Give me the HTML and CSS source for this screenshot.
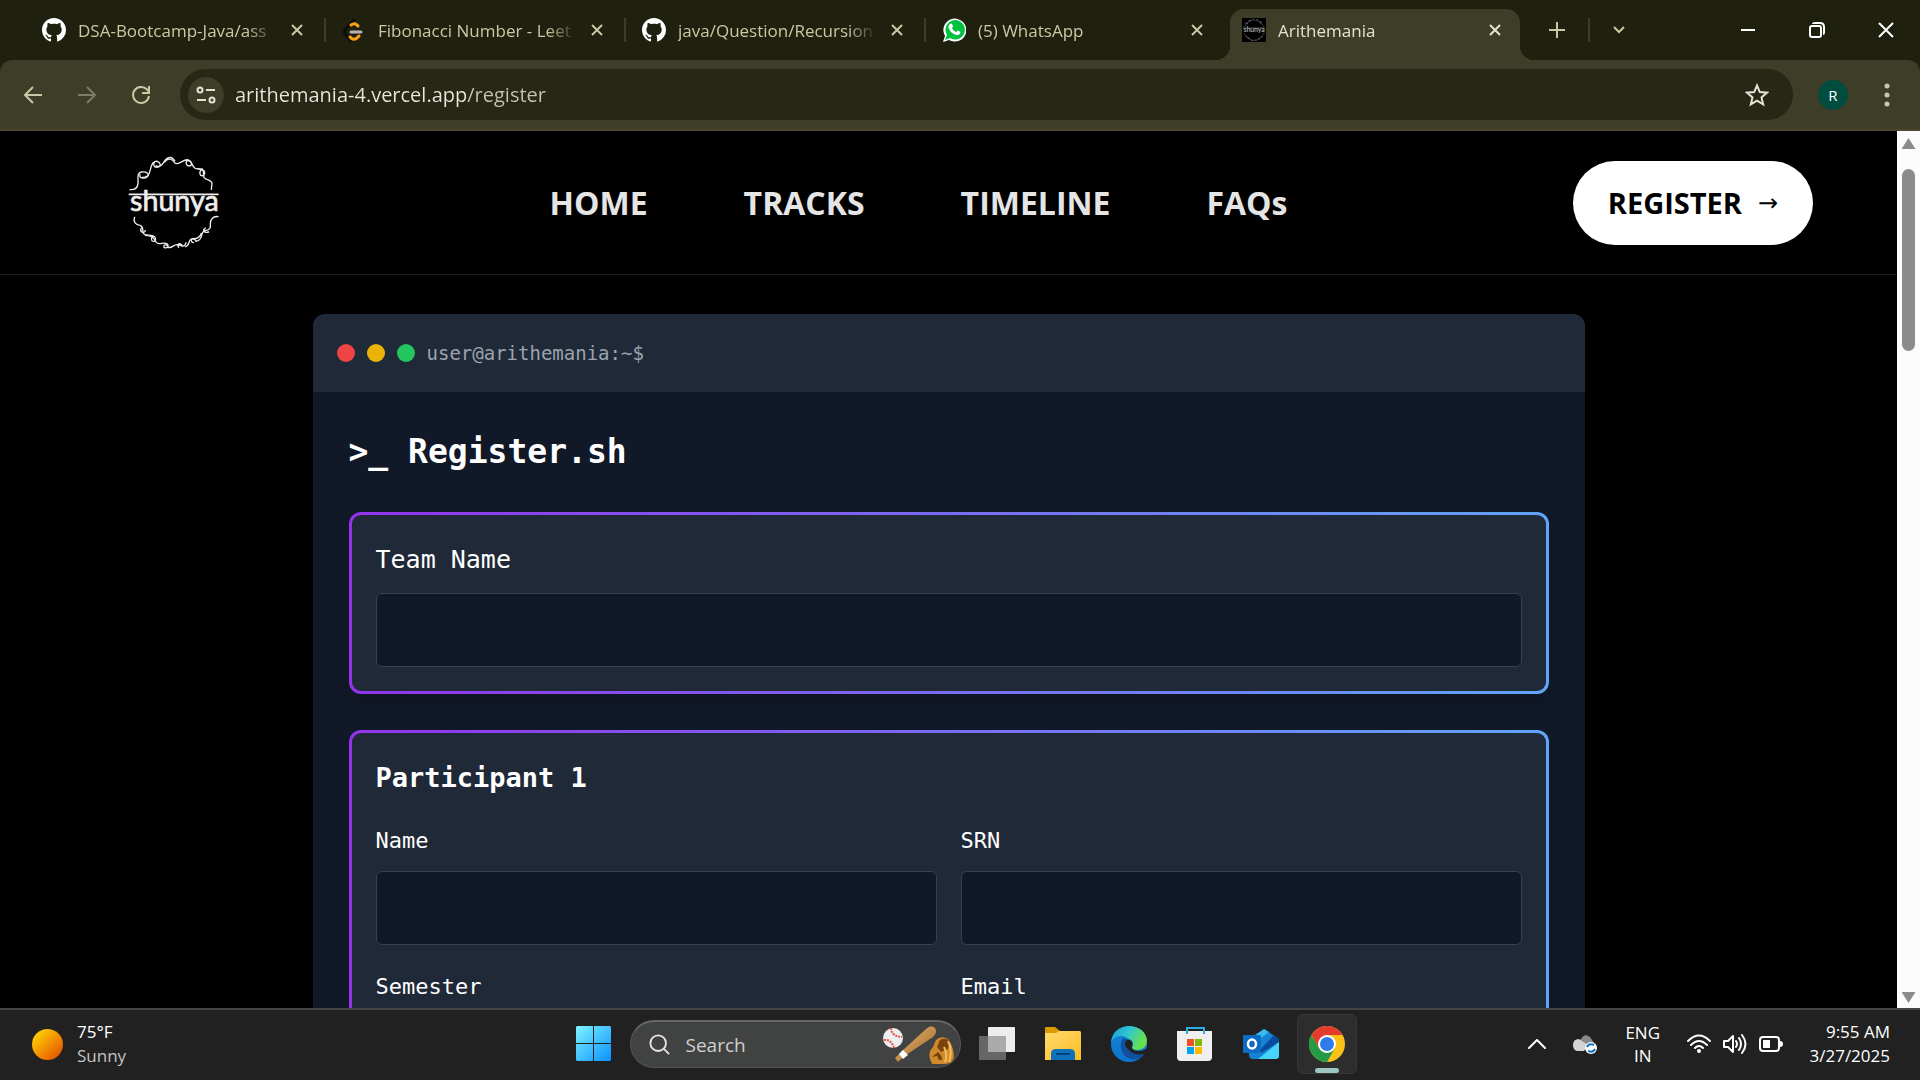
FILE: index.html
```html
<!DOCTYPE html>
<html lang="en">
<head>
<meta charset="utf-8">
<meta name="viewport" content="width=device-width, initial-scale=1">
<title>Arithemania</title>
<link rel="stylesheet" href="styles.css">
</head>
<body>
<svg class="defs" width="0" height="0" aria-hidden="true">
  <symbol id="github" viewBox="0 0 16 16"><path fill="#fff" d="M8 0C3.58 0 0 3.58 0 8c0 3.54 2.29 6.53 5.47 7.59.4.07.55-.17.55-.38 0-.19-.01-.82-.01-1.49-2.01.37-2.53-.49-2.69-.94-.09-.23-.48-.94-.82-1.13-.28-.15-.68-.52-.01-.53.63-.01 1.08.58 1.23.82.72 1.21 1.87.87 2.33.66.07-.52.28-.87.51-1.07-1.78-.2-3.64-.89-3.64-3.95 0-.87.31-1.59.82-2.15-.08-.2-.36-1.02.08-2.12 0 0 .67-.21 2.2.82.64-.18 1.32-.27 2-.27s1.36.09 2 .27c1.53-1.04 2.2-.82 2.2-.82.44 1.1.16 1.92.08 2.12.51.56.82 1.27.82 2.15 0 3.07-1.87 3.75-3.65 3.95.29.25.54.73.54 1.48 0 1.07-.01 1.93-.01 2.2 0 .21.15.46.55.38A8.01 8.01 0 0 0 16 8c0-4.42-3.58-8-8-8z"/></symbol>
  <symbol id="cross" viewBox="0 0 12 12"><path fill="none" stroke="currentColor" stroke-width="2" d="M1 1l10 10M11 1L1 11"/></symbol>
  <symbol id="emblem" viewBox="-6 15 300 300">
    <g fill="none" stroke="currentColor" stroke-width="4" stroke-linecap="round">
      <path d="M12 125C28 126 35 118 36 106C37 90 32 74 46 72C62 70 72 78 64 86C54 94 38 90 42 80"/>
      <path d="M48 88C72 90 70 72 76 54C80 40 92 36 100 44C106 50 102 58 92 58C84 58 80 48 86 42"/>
      <path d="M90 54C108 60 112 42 120 34C130 24 140 28 146 38"/>
      <path d="M116 42C126 26 140 34 146 44C158 56 172 30 188 36C198 42 200 52 190 54C182 54 178 46 182 40"/>
      <path d="M180 38C198 34 196 52 206 60C214 66 226 60 234 68C240 78 232 86 224 82C220 76 222 68 228 62"/>
      <path d="M214 62C240 62 230 78 234 88C240 98 256 94 258 106L256 124"/>
      <path d="M26 208C20 222 30 230 42 232C56 236 46 250 54 258C64 264 76 258 86 266C92 276 86 284 78 278C74 272 78 264 84 266"/>
      <path d="M46 240C40 250 52 260 58 248M58 262C84 264 84 272 90 282C98 294 112 280 124 288C130 296 122 302 114 298C112 290 118 288 126 294"/>
      <path d="M124 298C142 302 140 288 156 290C172 298 178 294 180 284M158 298C150 288 162 282 170 294"/>
      <path d="M178 296C194 292 184 276 198 272C214 274 222 268 226 256M202 284C188 278 200 266 210 278"/>
      <path d="M210 280C232 276 222 258 234 248C248 244 246 250 252 240C256 230 248 222 258 212C264 206 268 204 276 206M248 252C234 256 228 246 238 240"/>
      <path stroke-width="5" d="M10 139H276"/>
    </g>
    <text x="12" y="188" font-family="Lato, sans-serif" font-size="86" fill="currentColor" stroke="currentColor" stroke-width="2">shunya</text>
  </symbol>
</svg>

<div class="browser">
  <div class="tabstrip">
    <div class="tab"><svg class="fav"><use href="#github"/></svg><span class="title">DSA-Bootcamp-Java/ass</span><button class="close" aria-label="Close tab"><svg><use href="#cross"/></svg></button></div>
    <div class="tab"><svg class="fav" viewBox="0 0 24 24" fill="none" stroke-width="3" stroke-linecap="round"><path stroke="#0c0c08" d="M12 2L4 11q-3 3 0 6l4 5"/><path stroke="#ffa116" d="M9 7q4-3 7 1M8 19q4 5 9-1"/><path stroke="#b3b3b3" d="M9 14h10"/></svg><span class="title">Fibonacci Number - Leet</span><button class="close" aria-label="Close tab"><svg><use href="#cross"/></svg></button></div>
    <div class="tab"><svg class="fav"><use href="#github"/></svg><span class="title">java/Question/Recursion</span><button class="close" aria-label="Close tab"><svg><use href="#cross"/></svg></button></div>
    <div class="tab no-line"><svg class="fav" viewBox="0 0 24 24"><path fill="#fff" d="M1 24l2-6A11.500 11.500 0 1 1 7 22z"/><path fill="#00c13f" d="M3 22l2-5A9.700 9.700 0 1 1 8 20z"/><path fill="#fff" d="M8 6c1-1 2-.5 2.300.5l.7 1.800c.2.800-1 1.300-1 2 1 2 2.500 3 4 3.700.8 0 1.200-1.500 2-1.400l2.200 1.100c.8.700-.5 3.300-2.700 3.300C11 17 6.500 12 6.500 9 6.500 7.500 7.200 6.500 8 6z"/></svg><span class="title">(5) WhatsApp</span><button class="close" aria-label="Close tab"><svg><use href="#cross"/></svg></button></div>
    <div class="tab active"><svg class="fav mini"><use href="#emblem"/></svg><span class="title">Arithemania</span><button class="close" aria-label="Close tab"><svg><use href="#cross"/></svg></button></div>
    <button class="strip-btn" aria-label="New tab"><svg viewBox="0 0 16 16" width="16" height="16"><path d="M8 0v16M0 8h16"/></svg></button>
    <button class="strip-btn lined" aria-label="Search tabs"><svg viewBox="0 0 14 14" width="14" height="14"><path d="M2 4l5 5 5-5"/></svg></button>
    <div class="window-btns">
      <button aria-label="Minimize"><svg viewBox="0 0 16 16"><path d="M1 8h14"/></svg></button>
      <button aria-label="Restore"><svg viewBox="0 0 16 16"><rect x="1" y="4" width="11" height="11" rx="2"/><path d="M4 2q0-1 2-1h5q4 0 4 4v5q0 2-1 2"/></svg></button>
      <button aria-label="Close window"><svg viewBox="0 0 16 16"><path d="M1 1l14 14M15 1L1 15"/></svg></button>
    </div>
  </div>

  <div class="toolbar">
    <button class="tool" aria-label="Back"><svg viewBox="0 0 20 20"><path d="M19 10H2M10 2l-8 8 8 8"/></svg></button>
    <button class="tool dim" aria-label="Forward"><svg viewBox="0 0 20 20"><path d="M1 10h17M10 2l8 8-8 8"/></svg></button>
    <button class="tool" aria-label="Reload"><svg viewBox="0 0 20 20"><path d="M18 11a8 8 0 1 1-2-6.500L18 7M18 1v7h-7"/></svg></button>
    <div class="omnibox">
      <button class="site" aria-label="Site information"><svg viewBox="0 0 20 20"><circle cx="4" cy="5" r="2.500"/><path d="M10 5h9M1 15h9"/><circle cx="16" cy="15" r="2.500"/></svg></button>
      <input class="url" type="text" aria-label="Address" value="arithemania-4.vercel.app/register">
      <button class="star" aria-label="Bookmark"><svg viewBox="0 0 24 24"><path d="M12 2.500l2.800 6.600 7.200.6-5.500 4.700 1.700 7L12 17.700l-6.200 3.700 1.700-7L2 9.700l7.200-.6z"/></svg></button>
    </div>
    <button class="avatar">R</button>
    <button class="more" aria-label="Menu"><svg viewBox="0 0 6 24" width="6" height="24"><circle cx="3" cy="3" r="2.500"/><circle cx="3" cy="12" r="2.500"/><circle cx="3" cy="21" r="2.500"/></svg></button>
  </div>
</div>

<div class="viewport">
  <div class="page">
    <header class="site-header">
      <a class="logo" href="#" aria-label="Home"><svg><use href="#emblem"/></svg></a>
      <nav class="links">
        <a href="#home">HOME</a><a href="#tracks">TRACKS</a><a href="#timeline">TIMELINE</a><a href="#faqs">FAQs</a>
      </nav>
      <button class="register">REGISTER <span class="arrow">→</span></button>
    </header>
    <main class="terminal">
      <div class="terminal-bar">
        <span class="dot red"></span><span class="dot yellow"></span><span class="dot green"></span>
        <span class="prompt">user@arithemania:~$</span>
      </div>
      <form class="terminal-body">
        <h1>&gt;_ Register.sh</h1>
        <section class="card">
          <label class="team" for="team">Team Name</label>
          <input id="team" type="text">
        </section>
        <section class="card">
          <h2>Participant 1</h2>
          <div class="fields">
            <div><label for="name">Name</label><input id="name" type="text"></div>
            <div><label for="srn">SRN</label><input id="srn" type="text"></div>
            <div><label for="semester">Semester</label><input id="semester" type="text"></div>
            <div><label for="email">Email</label><input id="email" type="email"></div>
          </div>
        </section>
      </form>
    </main>
  </div>
  <div class="scrollbar"><span class="up"></span><span class="thumb"></span><span class="down"></span></div>
</div>

<footer class="taskbar">
  <div class="weather"><span class="sun"></span><p>75°F<br><span class="muted">Sunny</span></p></div>
  <div class="apps">
    <button class="app" aria-label="Start"><svg viewBox="0 0 36 36"><defs><linearGradient id="win" x1="0" y1="0" x2="1" y2="1"><stop offset="0" stop-color="#7df4ff"/><stop offset="1" stop-color="#0a90ff"/></linearGradient></defs><path fill="url(#win)" d="M1 0h16v17H0V1zM18 0h16l1 1v16H18zM0 18h17v17H1l-1-1zM18 18h17v16l-1 1H18z"/></svg></button>
    <div class="search">
      <svg class="glass" viewBox="0 0 24 24"><circle cx="10" cy="10" r="8.500"/><path d="M16 16l6 6"/></svg>
      <input type="text" aria-label="Search" placeholder="Search">
      <svg class="baseball" viewBox="0 0 72 40">
        <defs><linearGradient id="bat" x1="0" y1="0" x2="1" y2="1"><stop offset="0" stop-color="#e2b777"/><stop offset="1" stop-color="#a46620"/></linearGradient></defs>
        <circle cx="10" cy="13" r="10" fill="#eeedf2"/><path d="M8 3q0 8 11 9M1 15q7-1 10 8" fill="none" stroke="#e8543a" stroke-width="2" stroke-dasharray="2 1"/>
        <path fill="url(#bat)" d="M12 33l7-7L43 4q5-5 9-1 3 5-2 9L20 32l-5 5z"/><path fill="#fff" d="M16 29l4-4 5 5-5 4z"/>
        <path fill="#d08a2c" d="M47 34q-2-7 3-12l3-7q5-5 12-1 5 6 6 17 0 7-9 8H49z"/><path fill="#79420f" d="M54 22l3-7q5-3 10 1l-2 8-7 3zM50 31l5-4q4 3 4 8h-3l-2-4-5 1z"/><path d="M65 16q5 10 1 21M61 22q4 8 1 15" fill="none" stroke="#f3bd5c" stroke-width="2"/>
      </svg>
    </div>
    <button class="app" aria-label="Task view"><svg viewBox="0 0 36 36"><rect x="9" y="1" width="27" height="25" rx="1" fill="#eee"/><rect y="10" width="27" height="24" rx="1" fill="#666"/><path fill="#aaa" d="M9 10h18v16H9z"/></svg></button>
    <button class="app" aria-label="File Explorer"><svg viewBox="0 0 36 36"><defs><linearGradient id="fold" x1="0" y1="0" x2="1" y2="1"><stop offset="0" stop-color="#ffdb70"/><stop offset="1" stop-color="#fbbc20"/></linearGradient></defs><path fill="#dd9a00" d="M0 2q0-1 1-1h9l5 4v4H0z"/><path fill="url(#fold)" d="M0 7h11l3-2h21l1 1v28H0z"/><path fill="#0c72bd" d="M6 34v-6q0-5 5-5h14q5 0 5 5v6z"/><path stroke="#053f78" stroke-width="2" d="M11 28h14"/></svg></button>
    <button class="app" aria-label="Edge"><svg viewBox="0 0 36 36"><defs><linearGradient id="edge1" x1="0" y1="0" x2="1" y2=".4"><stop offset="0" stop-color="#1698dd"/><stop offset=".5" stop-color="#30c6d0"/><stop offset="1" stop-color="#67e24d"/></linearGradient><linearGradient id="edge2" x1="0" y1="0" x2="0" y2="1"><stop offset="0" stop-color="#1685cf"/><stop offset="1" stop-color="#0a74d2"/></linearGradient></defs><circle cx="18" cy="18" r="18" fill="url(#edge2)"/><path fill="#11509c" d="M12 12q-5 9 1 17 8 8 18 2l2-4q-9 3-13-3-5-5-2-10z"/><path fill="url(#edge1)" d="M0 16Q2 1 18 0q16 1 18 14 0 9-9 10-7 0-6-3 3-6-3-8Q8 5 0 16z"/><path fill="#202120" d="M14 18q1-5 5-4 4 3 2 7 0 4 7 4 5 0 8-3v4l-3 2q-9 2-14-3-5-4-5-7z"/></svg></button>
    <button class="app" aria-label="Microsoft Store"><svg viewBox="0 0 36 36"><path fill="none" stroke="#29aee8" stroke-width="2" d="M10 8V2h17v6"/><path fill="#efefef" d="M0 5h35v26q0 4-4 4H4q-4 0-4-4z"/><path fill="none" stroke="#29aee8" stroke-width="2" d="M10 8V5M27 8V5"/><path fill="#f25022" d="M10 13h7v7h-7z"/><path fill="#7fba00" d="M18 13h7v7h-7z"/><path fill="#00a4ef" d="M10 21h7v7h-7z"/><path fill="#ffb900" d="M18 21h7v7h-7z"/></svg></button>
    <button class="app" aria-label="Outlook"><svg viewBox="0 0 36 36"><path fill="#1583d2" d="M6 13L21 3l15 10v16q0 4-4 4H10q-4 0-4-4z"/><path fill="#39b9f0" d="M8 12L21 3l5 3L10 18z"/><path fill="#084a9e" d="M18 23L31 9l5 4v3L18 27z"/><path fill="#45d5fa" d="M15 33l21-17v14q0 3-4 3z"/><rect y="9" width="18" height="18" rx="1" fill="#0c6cc4"/><ellipse cx="9" cy="18" rx="4" ry="4.500" fill="none" stroke="#fff" stroke-width="2.500"/></svg></button>
    <button class="app current" aria-label="Chrome"><svg viewBox="0 0 36 36"><circle cx="18" cy="18" r="18" fill="#fbc116"/><path fill="#e33b2e" d="M2.400 9A18 18 0 0 1 33.600 9H18L10.200 22.500z"/><path fill="#279a47" d="M2.400 9A18 18 0 0 0 18 36l7.800-13.500H10.200z"/><circle cx="18" cy="18" r="9" fill="#fff"/><circle cx="18" cy="18" r="7" fill="#2f7bea"/></svg><span class="indicator"></span></button>
  </div>
  <div class="tray">
    <svg width="18" height="10" viewBox="0 0 18 10"><path class="line" d="M1 9l8-8 8 8"/></svg>
    <svg class="cloud" width="24" height="20" viewBox="0 0 24 20"><path fill="#888" d="M7 7Q11-2 17 3l4 6-8 6z"/><path fill="#d4d4d4" d="M0 11q0-6 6-6l9 6-4 6H4q-4-1-4-6z"/><circle cx="18" cy="14" r="6" fill="#fff"/><path fill="none" stroke="#1771c4" stroke-width="2" d="M14 13q2-4 7-2M22 15q-2 4-7 2"/></svg>
    <p class="lang">ENG<br>IN</p>
    <div class="status">
      <svg width="24" height="20" viewBox="0 0 24 20"><path class="line" d="M1 7q11-11 22 0M4 11q8-8 16 0M8 14q4-4 8 0"/><circle cx="12" cy="17" r="2" fill="#fff"/></svg>
      <svg width="24" height="20" viewBox="0 0 24 20"><path class="line" d="M1 7h4l5-5v16l-5-5H1zM13 7q2 3 0 6M16 4q4 6 0 12M19 1q7 9 0 18"/></svg>
      <svg width="24" height="20" viewBox="0 0 24 20"><rect class="line" x="1" y="3" width="19" height="14" rx="3"/><path fill="#fff" d="M4 6h7v8H4zM21 7q3 0 3 3t-3 3z"/></svg>
    </div>
    <p class="clock">9:55 AM<br>3/27/2025</p>
  </div>
</footer>
</body>
</html>
```
FILE: styles.css
```css
* { box-sizing: border-box; }
body {
  margin: 0;
  height: 100vh;
  display: flex;
  flex-direction: column;
  overflow: hidden;
  background: #000;
  color: #fff;
  font-family: "Open Sans", "Noto Sans", sans-serif;
}
button, input { font: inherit; color: inherit; border: 0; background: none; padding: 0; }
p, h1, h2 { margin: 0; }
svg { display: block; }
.defs { position: absolute; }

/* Browser window */
.browser { background: #1f200e; }
.tabstrip { display: flex; height: 60px; padding-left: 25px; color: #c8c9a5; }
.tab {
  position: relative;
  flex: 0 0 300px;
  min-width: 0;
  display: flex;
  align-items: center;
  gap: 12px;
  padding: 0 20px 0 17px;
}
.tab::after { content: ""; width: 2px; height: 24px; background: #3d3d28; position: absolute; right: -1px; top: 18px; }
.tab.no-line::after { display: none; }
.fav { flex: none; width: 24px; height: 24px; }
.mini { background: #000; color: #aaa; }
.title {
  flex: 1;
  min-width: 0;
  overflow: hidden;
  white-space: nowrap;
  padding-top: 2px;
  font-size: 17px;
  line-height: 24px;
  mask-image: linear-gradient(to right, #000 85%, transparent);
}
.close { flex: none; width: 16px; height: 16px; display: grid; place-items: center; }
.close svg { width: 12px; height: 12px; }
.tab.active {
  flex-basis: 290px;
  height: 51px;
  align-self: flex-end;
  margin: 0 6px 0 5px;
  padding: 0 17px 9px 12px;
  background: #3d3d28;
  border-radius: 14px 14px 0 0;
  color: #e3e4c9;
}
.tab.active::before, .tab.active::after {
  content: "";
  position: absolute;
  top: auto;
  bottom: 0;
  width: 14px;
  height: 14px;
}
.tab.active::before { left: -14px; background: radial-gradient(circle at 0 0, transparent 14px, #3d3d28 14px); }
.tab.active::after { right: -14px; background: radial-gradient(circle at 100% 0, transparent 14px, #3d3d28 14px); }
.strip-btn { flex: none; width: 62px; display: grid; place-items: center; }
.strip-btn svg { fill: none; stroke: currentColor; stroke-width: 2; }
.strip-btn.lined { background: linear-gradient(#3d3d28, #3d3d28) 0 18px / 2px 24px no-repeat; }
.window-btns { margin-left: auto; display: flex; }
.window-btns button { width: 69px; display: grid; place-items: center; }
.window-btns svg { width: 16px; height: 16px; fill: none; stroke: #fff; stroke-width: 2; }
.toolbar {
  display: flex;
  align-items: center;
  height: 71px;
  padding: 0 18px 0 6px;
  background: #3d3d28;
  border-bottom: 2px solid #49482f;
  border-radius: 12px 12px 0 0;
  color: #c8c9a5;
}
.tool { width: 54px; height: 54px; display: grid; place-items: center; }
.tool svg { width: 20px; height: 20px; fill: none; stroke: currentColor; stroke-width: 2; }
.dim { color: #7e7d63; }
.omnibox {
  flex: 1;
  display: flex;
  align-items: center;
  height: 51px;
  margin-left: 12px;
  padding: 0 24px 0 8px;
  border-radius: 26px;
  background: #262714;
  color: #e3e3d5;
}
.site { width: 36px; height: 36px; border-radius: 50%; background: #3d3d28; display: grid; place-items: center; }
.site svg { width: 20px; height: 20px; fill: none; stroke: currentColor; stroke-width: 2; }
.url {
  flex: 1;
  margin-left: 11px;
  font-size: 20px;
  outline: 0;
  color: transparent;
  background: linear-gradient(to right, #e9e9dc 232px, #c4c4b4 232px);
  background-clip: text;
}
.star svg { width: 24px; height: 24px; fill: none; stroke: currentColor; stroke-width: 2; }
.avatar { width: 30px; height: 30px; margin-left: 25px; border-radius: 50%; background: #004d40; color: #fff; font-size: 15px; }
.more { width: 30px; margin-left: 24px; display: grid; place-items: center; }
.more svg { fill: currentColor; }

/* Web page */
.viewport { flex: 1; min-height: 0; display: flex; overflow: hidden; }
.page { flex: 1; overflow: hidden; }
.site-header {
  display: flex;
  align-items: center;
  justify-content: space-between;
  height: 144px;
  padding: 0 84px;
  border-bottom: 1px solid #1c1c1c;
}
.logo { width: 180px; display: grid; place-items: center; color: #eee; }
.logo svg { width: 100px; height: 100px; }
.links { display: flex; gap: 96px; }
.links a { color: #e5e5e5; text-decoration: none; font-size: 32px; line-height: 44px; font-weight: 700; }
.register {
  display: flex;
  align-items: center;
  justify-content: center;
  gap: 16px;
  width: 240px;
  height: 84px;
  border-radius: 42px;
  background: #fff;
  color: #000;
  font-size: 29px;
  font-weight: 700;
}
.arrow { font-family: "DejaVu Sans", sans-serif; font-size: 24px; font-weight: 400; }
.terminal {
  max-width: 1272px;
  margin: 39px auto 0;
  border-radius: 12px;
  overflow: hidden;
  background: #111827;
  font-family: "DejaVu Sans Mono", "Liberation Mono", monospace;
}
.terminal-bar { display: flex; align-items: center; gap: 12px; height: 78px; padding: 0 24px; background: #1f2937; }
.dot { width: 18px; height: 18px; border-radius: 50%; }
.red { background: #ef4444; }
.yellow { background: #eab308; }
.green { background: #22c55e; }
.prompt { color: #9ca3af; font-size: 19px; }
.terminal-body { display: flex; flex-direction: column; gap: 36px; padding: 36px; }
h1 { font-size: 33px; line-height: 48px; }
h2 { font-size: 27px; line-height: 42px; margin-bottom: 24px; }
.card {
  padding: 24px;
  border: 3px solid transparent;
  border-radius: 12px;
  background: linear-gradient(#1f2937, #1f2937) padding-box, linear-gradient(to right, #9333ea, #60a5fa) border-box;
  box-shadow: 0 12px 18px -4px #0002;
}
.card label { display: block; margin-bottom: 12px; font-size: 22px; line-height: 36px; }
.card label.team { font-size: 25px; line-height: 42px; }
.card input { display: block; width: 100%; height: 74px; padding: 0 18px; border: 1px solid #374151; border-radius: 6px; background: #111827; }
.fields { display: grid; grid-template-columns: 1fr 1fr; gap: 24px; }
.scrollbar { flex: none; width: 23px; display: flex; flex-direction: column; align-items: center; padding: 7px 0 5px; background: #fcfcfc; }
.up, .down { width: 14px; height: 11px; background: #8b8b8b; clip-path: polygon(50% 0, 100% 100%, 0 100%); }
.down { margin-top: auto; clip-path: polygon(0 0, 100% 0, 50% 100%); }
.thumb { width: 13px; height: 182px; margin-top: 20px; border-radius: 7px; background: #8b8b8b; }

/* Taskbar */
.taskbar {
  flex: none;
  display: grid;
  grid-template-columns: 1fr auto 1fr;
  align-items: center;
  height: 72px;
  padding: 0 30px 2px;
  border-top: 2px solid #444543;
  background: #202120;
  font-size: 17px;
  line-height: 24px;
}
.weather { display: flex; align-items: center; gap: 14px; padding-left: 2px; }
.sun { width: 31px; height: 31px; border-radius: 50%; background: linear-gradient(135deg, #ffd400 10%, #e65300 90%); }
.muted { color: #c4c4c4; }
.apps { display: flex; align-items: center; gap: 6px; }
.app { position: relative; width: 60px; height: 60px; display: grid; place-items: center; border-radius: 6px; }
.app svg { width: 36px; height: 36px; }
.current { background: #2d2d2d; border: 1px solid #383838; }
.indicator { position: absolute; left: 17px; bottom: 0; width: 24px; height: 5px; border-radius: 3px; background: #9cc5c4; }
.search {
  display: flex;
  align-items: center;
  width: 331px;
  height: 48px;
  padding: 0 5px 0 18px;
  border: 1px solid #555;
  border-top: 2px solid #666;
  border-radius: 24px;
  background: #414242;
}
.glass { width: 22px; height: 22px; fill: none; stroke: #e4e4e4; stroke-width: 2; }
.search input { flex: 1; min-width: 0; margin-left: 15px; font-size: 19px; }
.search input::placeholder { color: #d0d0d0; opacity: 1; }
.baseball { width: 72px; height: 40px; }
.tray { display: flex; align-items: center; justify-content: flex-end; }
.line { fill: none; stroke: #fff; stroke-width: 2; stroke-linecap: round; stroke-linejoin: round; }
.cloud { margin-left: 27px; }
.lang { margin-left: 28px; text-align: center; line-height: 23px; }
.status { display: flex; gap: 12px; margin-left: 27px; }
.clock { min-width: 107px; text-align: right; }
```
